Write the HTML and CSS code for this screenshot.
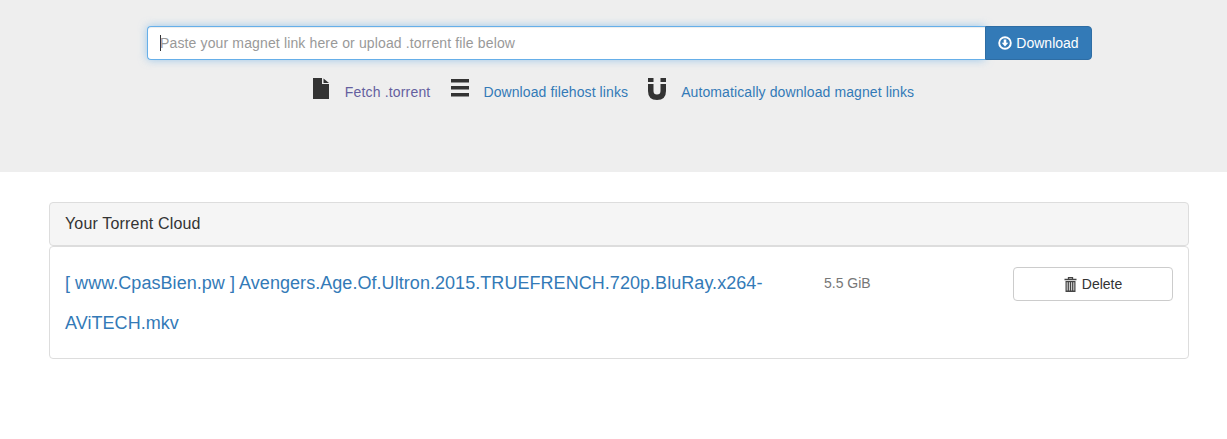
FILE: index.html
```html
<!DOCTYPE html>
<html lang="en">

<head>
    <meta charset="UTF-8">
    <meta name="viewport" content="width=device-width, initial-scale=1.0">
    <title>Your Torrent Cloud</title>
    <link rel="stylesheet" href="styles.css">
</head>

<body>
    <header class="top">
        <form class="search">
            <div class="search-input"><span class="caret"></span>Paste your magnet link here or upload .torrent file below</div>
            <button type="button" class="btn-download">
                <svg class="icon-download" viewBox="0 0 14 14" width="14" height="14">
                    <circle cx="7" cy="7" r="5.8" fill="none" stroke="#fff" stroke-width="1.9" />
                    <path d="M5.7 3.4h2.6v3.4h2L7 10.4 3.7 6.8h2z" fill="#fff" />
                </svg>
                Download
            </button>
        </form>
        <nav class="actions">
            <div class="action action-file">
                <svg viewBox="0 0 16 21" width="16" height="21">
                    <path d="M0 0h9v6h7v15H0z" fill="#333" />
                    <path d="M10.5 0.5 16 5h-5.500z" fill="#333" />
                </svg>
                <a href="#" class="visited">Fetch .torrent</a>
            </div>
            <div class="action action-list">
                <svg viewBox="0 0 18 18" width="18" height="18">
                    <path d="M0 0h18v3.500H0zM0 7h18v3.500H0zM0 14h18v3.500H0z" fill="#333" />
                </svg>
                <a href="#">Download filehost links</a>
            </div>
            <div class="action action-magnet">
                <svg viewBox="0 0 18 22" width="18" height="22">
                    <path d="M0 0h5.500v4H0zM12.500 0H18v4h-5.500z" fill="#333" />
                    <path d="M0 6h5.500v7q0 3.500 3.500 3.500t3.500-3.500V6H18v7q0 9-9 9t-9-9z" fill="#333" />
                </svg>
                <a href="#">Automatically download magnet links</a>
            </div>
        </nav>
    </header>

    <main class="cloud">
        <div class="panel-heading">Your Torrent Cloud</div>
        <div class="panel-body">
            <a href="#" class="file-name">[ www.CpasBien.pw ] Avengers.Age.Of.Ultron.2015.TRUEFRENCH.720p.BluRay.x264-AViTECH.mkv</a>
            <span class="file-size">5.5 GiB</span>
            <button type="button" class="btn-delete">
                <svg viewBox="0 0 13 15" width="13" height="15">
                    <path d="M4.500 2V0.700h4V2M0.500 2.500h12" fill="none" stroke="#444" stroke-width="1.300" />
                    <path d="M1.500 4h10v11h-10z" fill="#444" />
                    <path d="M3.200 5.200v8.300M5.400 5.200v8.300M7.600 5.200v8.300M9.800 5.200v8.300" stroke="#ddd" stroke-width="1" />
                </svg>
                Delete
            </button>
        </div>
    </main>
</body>

</html>
```

FILE: styles.css
```css
* {
    box-sizing: border-box;
}

body {
    margin: 0;
    font-family: "Liberation Sans", Arial, sans-serif;
    font-size: 14px;
    color: #333;
    background-color: #fff;
}

a {
    color: #337ab7;
    text-decoration: none;
}

.top {
    height: 172px;
    padding-top: 26px;
    background-color: #eee;
}

.search {
    display: flex;
    width: 945px;
    height: 34px;
    margin-left: 147px;
}

.search-input {
    flex: 1;
    display: flex;
    align-items: center;
    padding-left: 12px;
    letter-spacing: .14px;
    color: #999;
    background-color: #fff;
    border: 1px solid #66afe9;
    border-right: none;
    border-radius: 4px 0 0 4px;
    box-shadow: inset 0 1px 1px rgba(0, 0, 0, .075), 0 0 8px rgba(102, 175, 233, .6);
}

.caret {
    width: 1px;
    height: 16px;
    margin-right: -1px;
    background-color: #333;
}

.btn-download {
    position: relative;
    display: flex;
    align-items: center;
    justify-content: center;
    gap: 4px;
    width: 107px;
    padding: 0;
    font: inherit;
    color: #fff;
    background-color: #337ab7;
    border: 1px solid #2e6da4;
    border-radius: 0 4px 4px 0;
}

.actions {
    display: flex;
    justify-content: center;
    margin-top: 16px;
}

.action {
    display: flex;
    align-items: flex-end;
    height: 26px;
}

.action svg {
    display: block;
    margin-bottom: 3px;
}

.action a {
    line-height: 20px;
    letter-spacing: .1px;
}

.action-file svg {
    margin-right: 16px;
}

.action-file {
    margin-right: 21px;
}

.action-list svg {
    margin-right: 14px;
    margin-bottom: 5px;
}

.action-list {
    margin-right: 20px;
}

.action-magnet svg {
    margin-right: 15px;
    margin-bottom: 2px;
}

.action a.visited {
    letter-spacing: .17px;
    color: #655f9f;
}

.cloud {
    margin: 30px 38px 0 49px;
}

.panel-heading {
    height: 44px;
    padding: 0 15px;
    font-size: 16px;
    line-height: 42px;
    letter-spacing: .17px;
    background-color: #f5f5f5;
    border: 1px solid #ddd;
    border-radius: 4px;
}

.panel-body {
    display: grid;
    grid-template-columns: 759px 189px 160px;
    align-items: start;
    height: 113px;
    padding: 16px 15px 0;
    border: 1px solid #ddd;
    border-radius: 4px;
}

.file-name {
    font-size: 18px;
    line-height: 40px;
    letter-spacing: .05px;
    overflow-wrap: anywhere;
}

.file-size {
    line-height: 40px;
    color: #777;
}

.btn-delete {
    display: flex;
    align-items: center;
    justify-content: center;
    gap: 5px;
    height: 34px;
    margin-top: 4px;
    padding: 0;
    font: inherit;
    color: #333;
    background-color: #fff;
    border: 1px solid #ccc;
    border-radius: 4px;
}
```
